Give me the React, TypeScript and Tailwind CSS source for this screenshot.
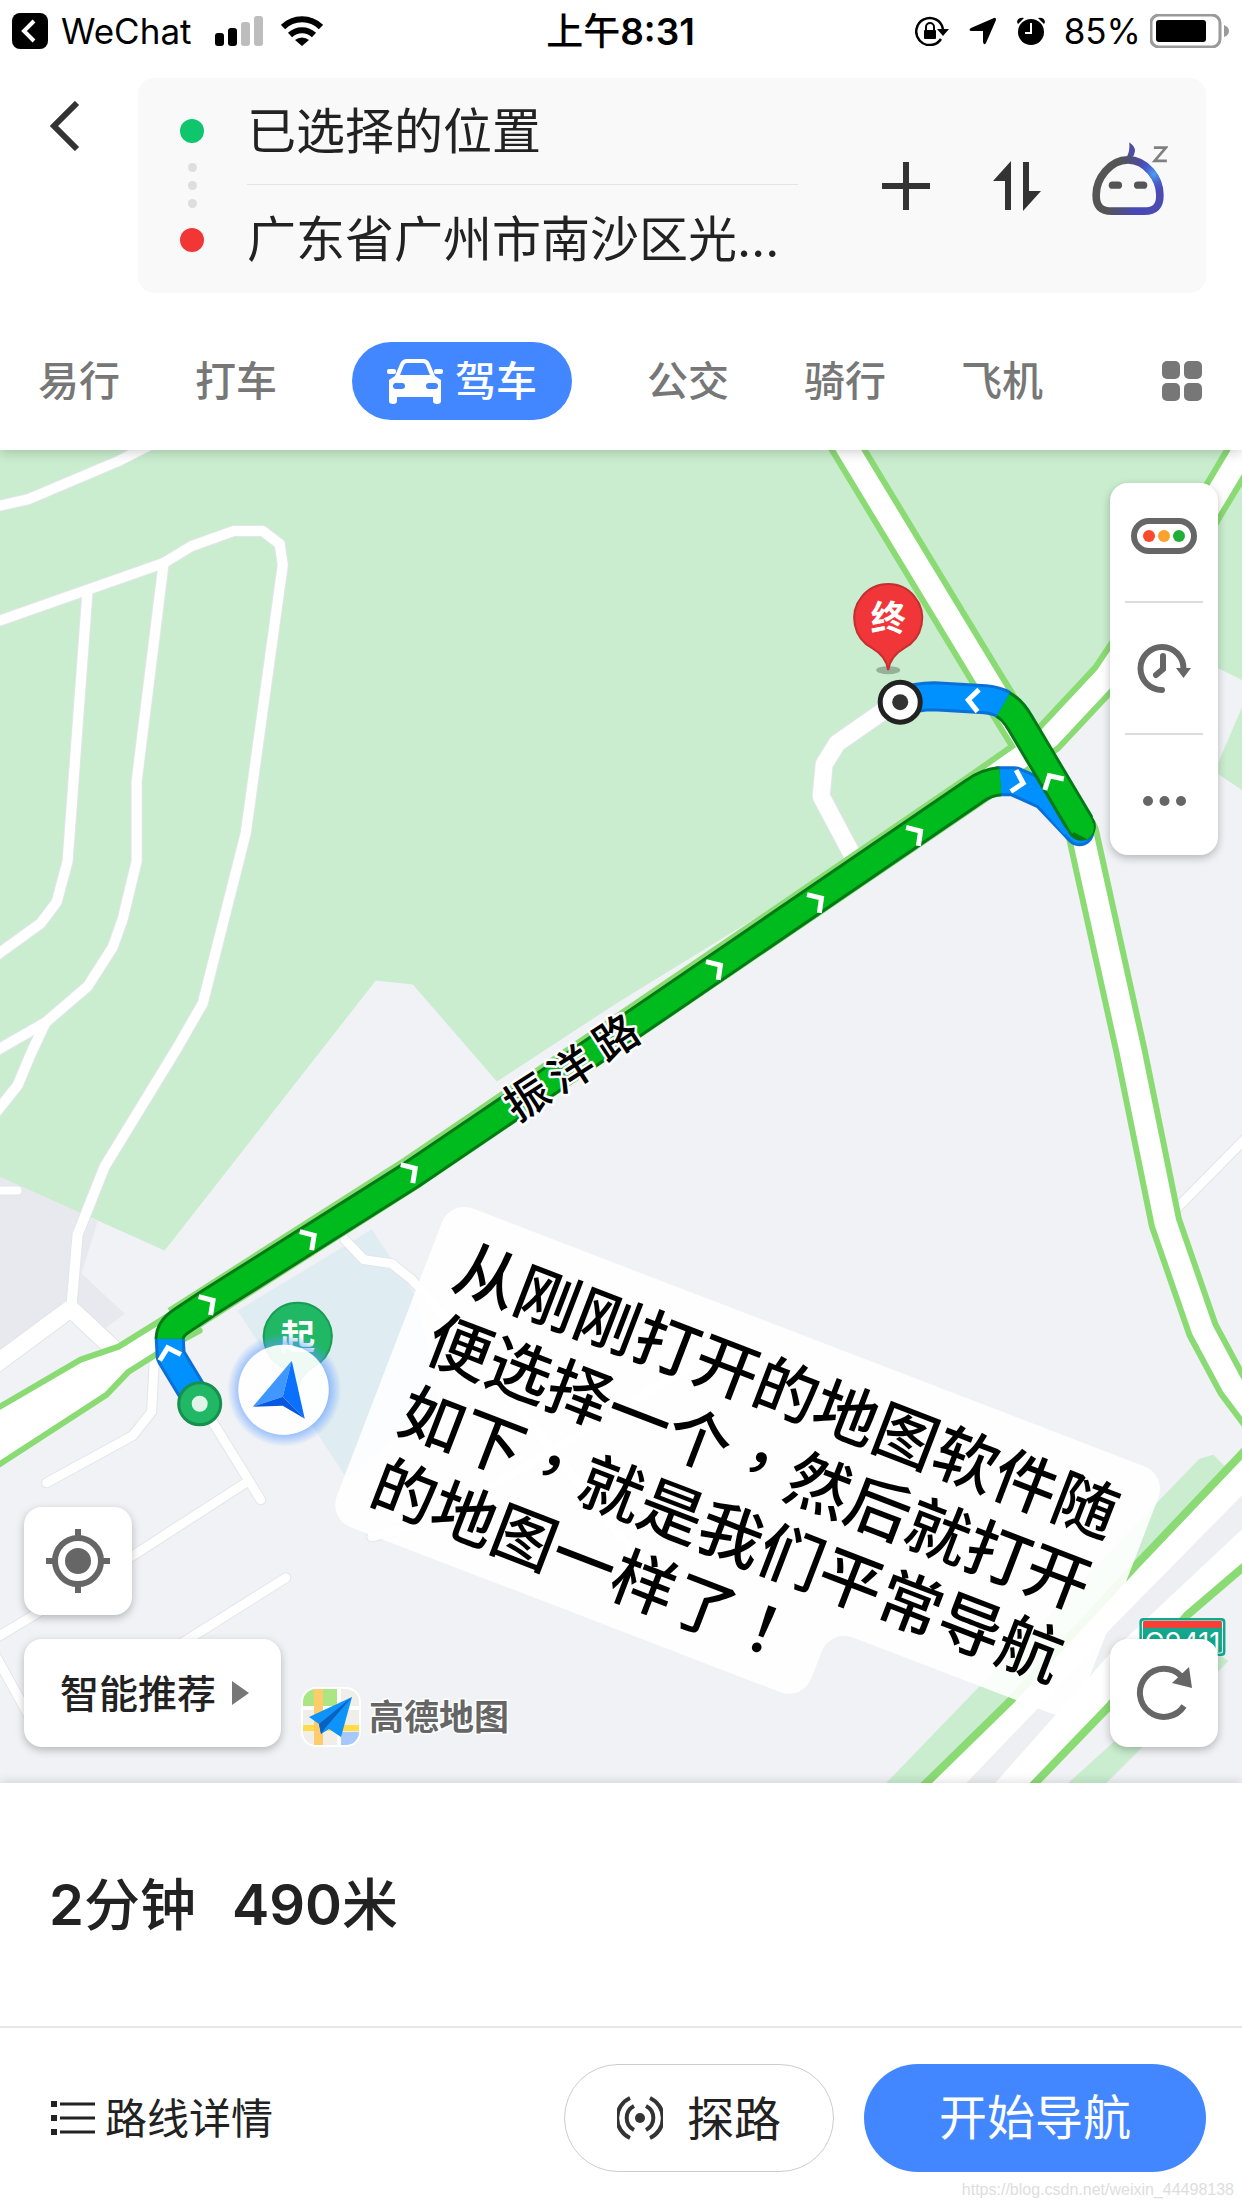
import { useState } from "react";

const FONT = "font-[Inter,'Noto_Sans_CJK_SC',sans-serif]";

const MODES = ["易行", "打车", "驾车", "公交", "骑行", "飞机"];

// minor streets, drawn twice: a grey edge and the white surface over it
const STREETS = [
  { d: "M-10 508 L29 499 L119 461 L160 440", w: 10 },
  { d: "M-10 624 L164 563 L192 546 L234 531 H263 L280 544 L283 565 L246 833 L203 1003 L176 1050 L105 1166 L78 1234 L72 1304", w: 10 },
  { d: "M88 590 L68 861 L57 902 L41 923 L-10 960", w: 10 },
  { d: "M164 563 L137 781 V861 L123 919 L113 947 L88 986 L46 1022 L-10 1054", w: 10 },
  { d: "M46 1022 L31 1054 L18 1085 L-10 1120", w: 10 },
  { d: "M-10 1190 H18", w: 8 },
  { d: "M-10 1368 L71 1308 L116 1350", w: 17 },
  { d: "M155 1352 L152 1411 L133 1435 L47 1482", w: 9 },
  { d: "M206 1410 L261 1499", w: 9 },
  { d: "M246 1482 L133 1555 L-10 1641", w: 9 },
  { d: "M286 1577 L170 1650", w: 9 },
  { d: "M-10 1644 L30 1716", w: 9 },
  { d: "M345 1239 L364 1259 L392 1263 L412 1279 L470 1345 L640 1560", w: 9 },
  { d: "M372 1536 L435 1520 L700 1360", w: 9 },
  { d: "M1172 1212 L1260 1123", w: 9 },
  { d: "M890 706 L837 743 L824 764 L821 796 L856 862", w: 17 },
];

const MAIN_ROADS = [
  "M836 430 L988 681 L1082 833 L1130 1050 L1165 1222 L1202 1329 L1232 1385 L1262 1425",
  "M1255 430 L1124 649 L1106 676 L1049 737 L975 789 L633 1022 L412 1172 L177 1322",
];

const ARROWS = [
  { x: 210, y: 1302, a: -33 },
  { x: 311, y: 1237, a: -33 },
  { x: 412, y: 1170, a: -33 },
  { x: 717, y: 967, a: -34 },
  { x: 818, y: 900, a: -34 },
  { x: 917, y: 833, a: -34 },
  { x: 1019, y: 782, a: 14 },
  { x: 1051, y: 779, a: -120 },
  { x: 972, y: 700, a: 184 },
  { x: 169, y: 1351, a: -106 },
];

const NOTE_LINES = ["从刚刚打开的地图软件随", "便选择一个,然后就打开", "如下,就是我们平常导航", "的地图一样了!"];

function StatusBar() {
  return (
    <div className="grid h-[62px] grid-cols-3 items-center pl-3 pr-[13px] text-[35px] leading-none text-black">
      <div className="flex items-center">
        <svg viewBox="0 0 36 36" className="size-9">
          <rect width="36" height="36" rx="8" />
          <path d="M22 8 L12 18 L22 28" fill="none" stroke="#fff" strokeWidth="4" />
        </svg>
        <span className="ml-[13px]">WeChat</span>
        <svg viewBox="0 0 49 30" className="ml-6 h-[30px] w-[49px]">
          <rect x="0" y="17" width="9" height="13" rx="3" />
          <rect x="13" y="12" width="9" height="18" rx="3" />
          <rect x="26" y="6" width="9" height="24" rx="3" fill="#bdbdbd" />
          <rect x="39" y="0" width="9" height="30" rx="3" fill="#bdbdbd" />
        </svg>
        <svg viewBox="0 0 42 30" className="ml-[17px] h-[30px] w-[42px]" fill="none" stroke="#000" strokeWidth="6">
          <path d="M2 11 A27 27 0 0 1 40 11" />
          <path d="M9 19 A17.500 17.500 0 0 1 33 19" />
          <path d="M21 30 L14 24 A11 11 0 0 1 28 24 Z" fill="#000" stroke="none" />
        </svg>
      </div>
      <div className="text-center text-[37px] font-semibold">
        <span className="font-medium">上午</span>8:31
      </div>
      <div className="flex items-center justify-end">
        <svg viewBox="0 0 34 30" className="h-[30px] w-[34px]">
          <path d="M26 23 A13.500 13.500 0 1 1 28 13" fill="none" stroke="#000" strokeWidth="2.500" />
          <path d="M22 13 H34 L28 20 Z" />
          <rect x="9" y="14" width="12" height="9" rx="1" />
          <path d="M11 15 V11 a4 4 0 0 1 8 0 V15" fill="none" stroke="#000" strokeWidth="2" />
        </svg>
        <svg viewBox="0 0 27 28" className="ml-5 h-7 w-[27px]">
          <path d="M25 1 Q27 0 27 3 L17 26 Q15 29 14 25 V14 H2 Q-1 13 2 11 Z" />
        </svg>
        <svg viewBox="0 0 28 28" className="ml-[21px] size-7">
          <circle cx="14" cy="15" r="13" />
          <path d="M0 5 Q1 0 7 1 L1 7 Z M28 5 Q27 0 21 1 L27 7 Z" />
          <path d="M14 6 V16 H8" fill="none" stroke="#fff" strokeWidth="2" />
        </svg>
        <span className="ml-[19px]">85%</span>
        <svg viewBox="0 0 79 34" className="ml-[9px] h-[34px] w-[79px]">
          <rect x="1" y="1" width="69" height="32" rx="8" fill="none" stroke="#9a9a9a" strokeWidth="3" />
          <rect x="6" y="6" width="50" height="22" rx="3" />
          <path d="M74 11 Q79 13 79 17 Q79 21 74 23 Z" fill="#9a9a9a" />
        </svg>
      </div>
    </div>
  );
}

function RouteCard() {
  return (
    <div className="flex flex-1 items-stretch rounded-2xl bg-[#f9f9f9] pl-[42px] pr-[38px]">
      <div className="flex flex-col items-center justify-center gap-5">
        <span className="size-6 rounded-full bg-[#0fc66d]" />
        <div className="flex flex-col gap-[9px]">
          <span className="size-[9px] rounded-full bg-[#dedede]" />
          <span className="size-[9px] rounded-full bg-[#dedede]" />
          <span className="size-[9px] rounded-full bg-[#dedede]" />
        </div>
        <span className="size-6 rounded-full bg-[#f23636]" />
      </div>
      <div className="ml-[43px] flex min-w-0 flex-1 flex-col divide-y divide-[#e4e4e4] text-[49px] text-[#222]">
        <input aria-label="起点" defaultValue="已选择的位置" className="h-[107px] w-full bg-transparent pb-2 outline-none" />
        <input aria-label="终点" defaultValue="广东省广州市南沙区光…" className="h-[108px] w-full bg-transparent pb-2 outline-none" />
      </div>
      <button aria-label="添加途经点" className="ml-[84px]">
        <svg viewBox="0 0 48 48" className="size-12" stroke="#333" strokeWidth="6">
          <path d="M0 24 H48 M24 0 V48" />
        </svg>
      </button>
      <button aria-label="交换起终点" className="ml-[63px]">
        <svg viewBox="0 0 48 50" className="h-[50px] w-12" fill="#333">
          <path d="M18 0 V49 H12 V20 H0 Z M30 1 V50 L48 30 H36 V1 Z" />
        </svg>
      </button>
      <button aria-label="语音助手" className="ml-[51px]">
        <svg viewBox="366 62 228 268" className="h-[89px] w-[76px]">
          <defs>
            <linearGradient id="bot" x1="0" y1="0.400" x2="1" y2="0.600">
              <stop offset="0.300" stopColor="#555" />
              <stop offset="0.700" stopColor="#4848b8" />
              <stop offset="1" stopColor="#4b4bb0" />
            </linearGradient>
            <radialGradient id="glow" gradientUnits="userSpaceOnUse" cx="552" cy="162" r="60">
              <stop offset="0" stopColor="#4aa4f5" />
              <stop offset="1" stopColor="#4545d0" stopOpacity="0" />
            </radialGradient>
          </defs>
          <path d="M478 66 Q496 80 495 92 Q494 104 486 112 L470 110 Q480 95 478 66 Z" fill="#4d4f9e" />
          <path d="M474 119 C420 119 378 175 378 225 C378 262 395 273 425 273 H523 C553 273 570 262 570 225 C570 175 528 119 474 119 Z" fill="none" stroke="url(#bot)" strokeWidth="23" />
          <path d="M474 119 C528 119 570 175 570 225" fill="none" stroke="url(#glow)" strokeWidth="23" />
          <rect x="416" y="184" width="40" height="22" rx="11" fill="#555" />
          <rect x="492" y="184" width="40" height="22" rx="11" fill="#555" />
          <path d="M552 82 H588 L554 122 H591" fill="none" stroke="#808080" strokeWidth="8" />
        </svg>
      </button>
    </div>
  );
}

function CarIcon() {
  return (
    <svg viewBox="0 0 56 46" className="h-[46px] w-14">
      <path d="M2 22 L8 18 L13 6 Q15 1 20 1 H36 Q41 1 43 6 L48 18 L54 22 V43 Q54 46 50 46 Q46 46 46 43 V39 H10 V43 Q10 46 6 46 Q2 46 2 43 Z" fill="#fff" />
      <path d="M13 17 L17 7 Q18 5 20 5 H36 Q38 5 39 7 L43 17 Z" fill="#4287ff" />
      <rect x="0" y="11" width="9" height="5" rx="2" fill="#fff" />
      <rect x="47" y="11" width="9" height="5" rx="2" fill="#fff" />
      <rect x="6" y="25" width="12" height="6" rx="3" fill="#4287ff" />
      <rect x="39" y="25" width="12" height="6" rx="3" fill="#4287ff" />
    </svg>
  );
}

function ModeTabs() {
  const [mode, setMode] = useState("驾车");

  return (
    <nav className="mt-[49px] flex items-center gap-[75px] pb-[30px] pl-[38px] pr-10 text-[41px] font-medium leading-none">
      {MODES.map((m) =>
        m === mode ? (
          <button key={m} className="flex h-[78px] items-center gap-3 whitespace-nowrap rounded-full bg-[#4287ff] px-[35px] text-white">
            <CarIcon />
            {m}
          </button>
        ) : (
          <button key={m} onClick={() => setMode(m)} className="whitespace-nowrap text-[#777]">
            {m}
          </button>
        )
      )}
      <button aria-label="更多" className="ml-auto">
        <svg viewBox="0 0 40 40" className="size-10" fill="#777">
          <rect width="18" height="18" rx="5" />
          <rect x="22" width="18" height="18" rx="5" />
          <rect y="22" width="18" height="18" rx="5" />
          <rect x="22" y="22" width="18" height="18" rx="5" />
        </svg>
      </button>
    </nav>
  );
}

function MapCanvas() {
  return (
    <svg viewBox="0 450 1242 1332" preserveAspectRatio="xMidYMid slice" className="absolute inset-0 size-full">
      <rect y="450" width="1242" height="1332" fill="#f0f2f6" />

      {/* blocks */}
      <path d="M0 1170 L98 1221 L82 1273 L125 1313 L100 1332 L71 1308 L0 1350 Z" fill="#e8e9ee" />
      <path d="M0 450 H1242 V680 L1218 668 L1110 676 L1045 748 L975 783 L621 1000 L497 1081 L413 984 L376 980 L165 1250 L0 1176 Z" fill="#c9edce" />
      <path d="M1242 706 L1218 762 V774 L1242 790 Z" fill="#c9edce" />
      <path d="M238 1310 L372 1229 L416 1295 L440 1400 L347 1478 Z" fill="#dfecf2" />
      <path d="M886 1782 L1199 1458 L1213 1454 L1225 1466 L930 1782 Z" fill="#c9edce" />
      <path d="M1068 1782 L1214 1650 L1228 1660 L1106 1782 Z" fill="#c9edce" />

      {/* streets */}
      <g fill="none" strokeLinecap="round" strokeLinejoin="round">
        {STREETS.map((s) => (
          <path key={s.d} d={s.d} stroke="#e3e5ea" strokeWidth={s.w + 2} />
        ))}
        {STREETS.map((s) => (
          <path key={s.d} d={s.d} stroke="#fff" strokeWidth={s.w} />
        ))}
      </g>

      {/* highway in the bottom right corner */}
      <path d="M924 1782 L1011 1699 L1136 1564 L1242 1451 V1567 L1187 1614 L1110 1704 L1035 1782 Z" fill="#fff" />
      <path d="M966 1782 L1037 1708 L1112 1626 L1242 1494 V1528 L1112 1650 L995 1782 Z" fill="#edeff3" />
      <path d="M922 1786 L1011 1699 L1136 1564 L1248 1446 M1031 1786 L1110 1704 L1187 1614 L1248 1562" fill="none" stroke="#8bdb75" strokeWidth="8" />

      {/* main roads */}
      <g fill="none" strokeLinejoin="round">
        {MAIN_ROADS.map((d) => (
          <path key={d} d={d} stroke="#8bdb75" strokeWidth="34" />
        ))}
        <path d="M-10 1412 L81 1359 L119 1346 L180 1308 L200 1330 L156 1354 L129 1371 L107 1394 L-10 1470 Z" fill="#fff" stroke="#8bdb75" strokeWidth="6" />
        {MAIN_ROADS.map((d) => (
          <path key={d} d={d} stroke="#fff" strokeWidth="22" />
        ))}
      </g>

      {/* planned route */}
      <g fill="none" strokeLinejoin="round">
        <path d="M200 1403 L171 1355 L170 1336" stroke="#0a6fd6" strokeWidth="30" />
        <path d="M200 1403 L171 1355 L170 1336" stroke="#0091ff" strokeWidth="24" />
        <path d="M999 781 L1014 781 L1045 795 L1079 831" stroke="#0a6fd6" strokeWidth="30" strokeLinecap="round" />
        <path d="M999 781 L1014 781 L1045 795 L1079 831" stroke="#0091ff" strokeWidth="24" strokeLinecap="round" />
        <path d="M170 1338 Q170 1328 182 1320 L206 1304 L412 1174 L633 1024 L974 791 Q986 782 1000 781" stroke="#007a14" strokeWidth="30" />
        <path d="M170 1338 Q170 1328 182 1320 L206 1304 L412 1174 L633 1024 L974 791 Q986 782 1000 781" stroke="#00bb1e" strokeWidth="24" />
        <path d="M1081 826 L1081 826" stroke="#007a14" strokeWidth="29" strokeLinecap="round" />
        <path d="M1080 824 L1020 723 Q1012 709 1002 704" stroke="#007a14" strokeWidth="30" />
        <path d="M1082 827 L1020 723 Q1012 709 1002 704" stroke="#00bb1e" strokeWidth="24" strokeLinecap="butt" />
        <path d="M1093 823 A14 14 0 0 1 1087 839 L1070 830 L1052 800 Z" fill="#00bb1e" />
        <path d="M1066 833 L1046 810" stroke="#0091ff" strokeWidth="5" />
        <path d="M1003 704 Q996 700 985 699 L934 696 Q916 696 900 702" stroke="#0a6fd6" strokeWidth="30" />
        <path d="M1003 704 Q996 700 985 699 L934 696 Q916 696 900 702" stroke="#0091ff" strokeWidth="24" />
      </g>
      {ARROWS.map((p) => (
        <path
          key={`${p.x}-${p.y}`}
          d="M-6 -11 L4 0 L-6 11"
          transform={`translate(${p.x} ${p.y}) rotate(${p.a})`}
          fill="none"
          stroke="#fff"
          strokeWidth="5"
        />
      ))}

      {/* road name follows the road, one glyph at a time */}
      <g fontSize="44" fontWeight="500" textAnchor="middle" stroke="#fff" strokeWidth="5" strokeLinejoin="round" paintOrder="stroke">
        <text transform="translate(527 1097) rotate(-33)" y="16">振</text>
        <text transform="translate(571 1069) rotate(-33)" y="16">洋</text>
        <text transform="translate(616 1037) rotate(-33)" y="16">路</text>
      </g>

      {/* destination */}
      <ellipse cx="888" cy="670" rx="12" ry="4" fill="#000" opacity="0.250" />
      <path d="M888 670 Q886 656 872 648 A34 34 0 1 1 904 648 Q890 656 888 670 Z" fill="#f03638" stroke="#c62f30" strokeWidth="2" />
      <text x="888" y="631" fontSize="35" fontWeight="700" textAnchor="middle" fill="#fff">终</text>
      <circle cx="900" cy="702" r="20" fill="#fff" stroke="#222" strokeWidth="5" />
      <circle cx="900" cy="702" r="8" fill="#333" />

      {/* origin and current position */}
      <circle cx="200" cy="1403" r="21" fill="#20b765" stroke="#178f4e" strokeWidth="3" />
      <circle cx="200" cy="1403" r="8" fill="#e0f5ea" />
      <path d="M298 1388 Q296 1374 282 1366 A34 34 0 1 1 314 1366 Q300 1374 298 1388 Z" fill="#20b765" stroke="#1a9c55" strokeWidth="2" />
      <text x="298" y="1349" fontSize="35" fontWeight="700" textAnchor="middle" fill="#fff">起</text>
      <defs>
        <radialGradient id="halo">
          <stop offset="0.760" stopColor="#5c9dff" stopOpacity="0.650" />
          <stop offset="1" stopColor="#5c9dff" stopOpacity="0" />
        </radialGradient>
      </defs>
      <path d="M284 1332 a57 57 0 1 0 1 0 Z M284 1344 a45 45 0 1 1 -1 0 Z" fill="url(#halo)" fillRule="evenodd" />
      <circle cx="284" cy="1389" r="45" fill="#fff" opacity="0.930" />
      <path d="M292 1360 L253 1406 L283 1396 Z" fill="#3f98ff" />
      <path d="M292 1360 L283 1396 L305 1418 Z" fill="#0a70ff" />
      <path d="M253 1406 L283 1396 L305 1418 L283 1405 Z" fill="#0757e0" />

      {/* expressway shield */}
      <rect x="1139" y="1617" width="86" height="38" rx="4" fill="#13a88d" />
      <rect x="1142" y="1620" width="80" height="32" rx="2" fill="none" stroke="#fff" strokeWidth="1" />
      <rect x="1143" y="1620" width="78" height="7" fill="#fa3d35" />
      <text x="1182" y="1651" fontSize="27" textAnchor="middle" fill="#fff">G9411</text>

      {/* handwritten-style note laid over the map */}
      <g transform="translate(483 1274) rotate(21)">
        <path
          d="M-33 -58 H686 A24 24 0 0 1 710 -34 V182 A24 24 0 0 1 686 206 H475 A24 24 0 0 0 451 230 V259 A24 24 0 0 1 427 283 H-33 A24 24 0 0 1 -57 259 V-34 A24 24 0 0 1 -33 -58 Z"
          fill="#fff"
          opacity="0.900"
        />
        <g fontSize="64" fontWeight="500">
          {NOTE_LINES.map((line, i) => (
            <text key={line} x="-27" y={23 + i * 77}>
              {line.split(/([,!])/).map((part, k) =>
                part === "," || part === "!" ? (
                  <tspan key={k} fontFamily="Noto Sans CJK TC">
                    {part === "," ? "，" : "！"}
                  </tspan>
                ) : (
                  part
                )
              )}
            </text>
          ))}
        </g>
      </g>
    </svg>
  );
}

function SideTools() {
  return (
    <div className="absolute right-6 top-[33px] flex w-27 flex-col items-center divide-y-2 divide-[#dcdcdc] rounded-[18px] bg-white px-[15px] shadow-[0_3px_8px_rgba(0,0,0,0.25)]">
      <button aria-label="路况" className="flex h-[120px] w-full items-center justify-center pb-3">
        <svg viewBox="0 0 66 36" className="h-9 w-[66px]">
          <rect x="3" y="3" width="60" height="30" rx="15" fill="#fff" stroke="#666" strokeWidth="6" />
          <circle cx="18" cy="18" r="6" fill="#fb4a2d" />
          <circle cx="33" cy="18" r="6" fill="#fca12c" />
          <circle cx="48" cy="18" r="6" fill="#22ad38" />
        </svg>
      </button>
      <button aria-label="出发时间" className="flex h-[132px] w-full items-center justify-center">
        <svg viewBox="-26 -26 54 52" className="h-[52px] w-[54px]" fill="none" stroke="#666" strokeWidth="6">
          <path d="M-1 22 A21.500 21.500 0 1 1 20.500 1" strokeLinecap="round" />
          <path d="M13 0 H28 L20.500 10 Z" fill="#666" stroke="none" />
          <path d="M0 -12 V1 L-7 7" strokeLinecap="round" />
        </svg>
      </button>
      <button aria-label="更多选项" className="flex h-[120px] w-full items-center justify-center pt-3">
        <svg viewBox="0 0 43 10" className="h-[10px] w-[43px]" fill="#666">
          <circle cx="5" cy="5" r="5" />
          <circle cx="21.500" cy="5" r="5" />
          <circle cx="38" cy="5" r="5" />
        </svg>
      </button>
    </div>
  );
}

function AmapLogo() {
  return (
    <svg viewBox="0 0 60 60" className="size-[60px]">
      <defs>
        <clipPath id="logo">
          <rect x="2" y="2" width="56" height="56" rx="13" />
        </clipPath>
      </defs>
      <rect width="60" height="60" rx="15" fill="#fff" />
      <g clipPath="url(#logo)">
        <rect width="60" height="60" fill="#efeee9" />
        <rect width="36" height="19" fill="#abe683" />
        <rect y="19" width="60" height="4" fill="#fff" />
        <rect x="36" width="4" height="60" fill="#fff" />
        <rect y="38" width="60" height="6" fill="#ffdc48" />
        <rect x="13" width="9" height="60" fill="#ffcb6b" />
        <rect x="40" y="45" width="20" height="15" fill="#a6c8fb" />
      </g>
      <path d="M51 10 L8 30 L18 37 L20 47 L28 42 L40 50 Z" fill="#0e93fb" />
      <path d="M51 10 L18 37 L20 47 L25 40 Z" fill="#0a62c0" />
    </svg>
  );
}

function MapControls() {
  return (
    <>
      <div className="absolute bottom-9 left-6 flex flex-col gap-6">
        <button aria-label="定位" className="flex size-27 items-center justify-center rounded-[18px] bg-white shadow-[0_3px_8px_rgba(0,0,0,0.25)]">
          <svg viewBox="0 0 64 64" className="size-16" stroke="#666" strokeWidth="6">
            <circle cx="32" cy="32" r="23" fill="none" />
            <circle cx="32" cy="32" r="13" fill="#666" stroke="none" />
            <path d="M32 0 V8 M32 56 V64 M0 32 H8 M56 32 H64" />
          </svg>
        </button>
        <div className="flex items-center gap-5">
          <button className="flex h-27 items-center gap-4 whitespace-nowrap rounded-[18px] bg-white pl-9 pr-8 text-[39px] font-medium leading-none text-[#222] shadow-[0_3px_8px_rgba(0,0,0,0.25)]">
            智能推荐
            <svg viewBox="0 0 17 24" className="h-6 w-[17px]" fill="#777">
              <path d="M0 0 L17 12 L0 24 Z" />
            </svg>
          </button>
          <div className="flex items-center gap-2 pt-12">
            <AmapLogo />
            <span className="text-[35px] font-bold leading-none text-[#666] [paint-order:stroke] [-webkit-text-stroke:3px_white]">高德地图</span>
          </div>
        </div>
      </div>
      <button aria-label="刷新" className="absolute bottom-9 right-6 flex size-27 items-center justify-center rounded-[18px] bg-white shadow-[0_3px_8px_rgba(0,0,0,0.25)]">
        <svg viewBox="-28 -28 56 56" className="size-14">
          <path d="M20 13 A24 24 0 1 1 17 -17" fill="none" stroke="#666" strokeWidth="6" />
          <path d="M25 -26 L28 -5 L8 -10 Z" fill="#666" />
        </svg>
      </button>
    </>
  );
}

function BottomPanel() {
  return (
    <section className="relative z-10 bg-white text-[#222] shadow-[0_-1px_10px_rgba(0,0,0,0.14)]">
      <div className="flex h-[245px] items-center gap-9 border-b-2 border-[#e8e8e8] pl-[49px] text-[56px] font-semibold leading-none">
        <span>
          2<span className="font-medium">分钟</span>
        </span>
        <span>
          490<span className="font-medium">米</span>
        </span>
      </div>
      <div className="flex items-center py-9 pl-[51px] pr-9">
        <button className="flex items-center gap-[10px] whitespace-nowrap text-[42px]">
          <svg viewBox="0 0 44 34" className="h-[34px] w-11" stroke="#222" strokeWidth="3">
            <path d="M9 3 H44 M9 17 H44 M9 31 H44" />
            <path d="M0 3 H6 M0 17 H6 M0 31 H6" strokeWidth="6" />
          </svg>
          路线详情
        </button>
        <button className="ml-auto flex h-27 w-[270px] items-center justify-center gap-6 rounded-full border border-[#ccc] text-[47px] leading-none">
          <svg viewBox="-23 -23 46 46" className="size-[46px]" fill="none" stroke="#333" strokeWidth="4">
            <circle r="5" fill="#333" stroke="none" />
            <path d="M6 -12 A13.500 13.500 0 0 1 6 12 M-6 -12 A13.500 13.500 0 0 0 -6 12" />
            <path d="M10 -20 A22 22 0 0 1 10 20 M-10 -20 A22 22 0 0 0 -10 20" />
          </svg>
          探路
        </button>
        <button className="ml-[30px] h-27 w-[342px] rounded-full bg-[#4287ff] text-[48px] leading-none text-white">开始导航</button>
      </div>
      <span className="absolute bottom-[10px] right-2 font-['Liberation_Sans'] text-base leading-none text-[#dedede]">https://blog.csdn.net/weixin_44498138</span>
    </section>
  );
}

export default function App() {
  return (
    <div className={`flex min-h-screen flex-col bg-white ${FONT}`}>
      <header className="relative z-10 bg-white shadow-[0_2px_12px_rgba(0,0,0,0.2)]">
        <StatusBar />
        <div className="mt-4 flex pl-[50px] pr-9">
          <button aria-label="返回" className="flex w-[88px] items-start pt-[23px]">
            <svg viewBox="0 0 30 50" className="h-[50px] w-[30px]" fill="none" stroke="#333" strokeWidth="6">
              <path d="M27 2 L4 25 L27 48" />
            </svg>
          </button>
          <RouteCard />
        </div>
        <ModeTabs />
      </header>
      <main className="relative flex-1 overflow-hidden">
        <MapCanvas />
        <SideTools />
        <MapControls />
      </main>
      <BottomPanel />
    </div>
  );
}
